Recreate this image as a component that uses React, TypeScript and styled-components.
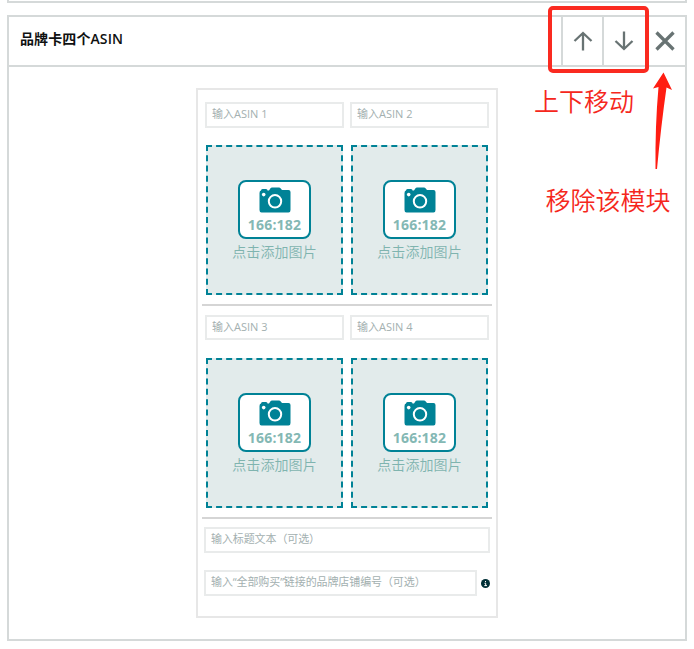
import React from 'react';
import styled, { createGlobalStyle } from 'styled-components';

const Global = createGlobalStyle`
  * { box-sizing: border-box; }
  html, body { margin: 0; background: #fff; }
  body {
    width: 694px;
    height: 649px;
    overflow: hidden;
    font-family: "Open Sans", "Noto Sans CJK SC", sans-serif;
  }
  svg { flex-shrink: 0; }
`;

const Page = styled.div`
  position: relative;
  width: 694px;
  height: 649px;
  padding: 0 7px;
  overflow: hidden;
`;

const PreviousModule = styled.div`
  height: 3px;
  margin-bottom: 12px;
  border: 2px solid #d5d9d9;
  border-top: 0;
`;

const Module = styled.section`
  display: flex;
  flex-direction: column;
  align-items: center;
  height: 626px;
  border: 2px solid #d5d9d9;
`;

const Header = styled.header`
  display: flex;
  align-self: stretch;
  align-items: stretch;
  height: 50px;
  margin-bottom: 21px;
  border-bottom: 2px solid #d5d9d9;
`;

const Title = styled.h2`
  flex: 1;
  margin: 0;
  padding: 0 0 1px 11px;
  font-size: 14px;
  line-height: 44px;
  font-weight: 600;
  letter-spacing: 0.1px;
  color: #0f1111;
`;

const HeaderButton = styled.button<{ $width: number; $divided?: boolean }>`
  display: flex;
  align-items: center;
  justify-content: center;
  width: ${p => p.$width}px;
  padding: 0 0 0 ${p => (p.$divided ? 0 : 1)}px;
  border: 0;
  border-left: ${p => (p.$divided ? '2px solid #d5d9d9' : '0')};
  background: transparent;
  color: #687373;
`;

const Card = styled.div`
  width: 302px;
  height: 530px;
  padding: 12px 4px 0;
  border: 2px solid #e7e7e7;
`;

const Products = styled.div<{ $last?: boolean }>`
  display: grid;
  grid-template-columns: 139px 139px;
  column-gap: 6px;
  row-gap: ${p => (p.$last ? 18 : 17)}px;
  justify-items: center;
  padding: 0 3px 9px;
  margin-bottom: ${p => (p.$last ? 8 : 9)}px;
  border-bottom: 2px solid #d5d5d5;
`;

const Field = styled.input<{ $width: number; $height?: number }>`
  display: block;
  width: ${p => p.$width}px;
  height: ${p => p.$height ?? 26}px;
  padding: 0 5px 3px;
  border: 2px solid #e9ebeb;
  border-radius: 0;
  background: #fff;
  outline: 0;
  font: 400 11px "Open Sans", "Noto Sans CJK SC", sans-serif;
  &::placeholder { color: #a3b0b0; opacity: 1; }
`;

const WideField = styled(Field)`
  letter-spacing: -0.1px;
`;

const DropZone = styled.div`
  display: flex;
  flex-direction: column;
  align-items: center;
  width: 137px;
  height: 150px;
  padding-top: 33px;
  border: 2px dashed #008296;
  background: #e2ebeb;
`;

const ImageSize = styled.div`
  display: flex;
  flex-direction: column;
  align-items: center;
  width: 73px;
  height: 59px;
  padding-top: 5px;
  border: 2px solid #008296;
  border-radius: 8px;
  background: #fff;
  color: #84b8b4;
  font-size: 14px;
  line-height: 24px;
  font-weight: 700;
  letter-spacing: 0.2px;
`;

const AddLabel = styled.span`
  margin-top: 2px;
  font-size: 14px;
  line-height: 21px;
  font-weight: 350;
  letter-spacing: 0.1px;
  color: #7fb4af;
`;

const Fields = styled.div`
  display: grid;
  row-gap: 17px;
  padding-left: 2px;
`;

const FieldRow = styled.div`
  display: flex;
  align-items: center;
  gap: 4px;
`;

const Highlight = styled.div`
  position: absolute;
  left: 548px;
  top: 6px;
  width: 101px;
  height: 67px;
  border: 4px solid #fa2a20;
  border-radius: 5px;
`;

const Note = styled.div<{ $x: number; $y: number }>`
  position: absolute;
  left: ${p => p.$x}px;
  top: ${p => p.$y}px;
  font: 350 25px/36px "Noto Sans CJK SC", sans-serif;
  white-space: nowrap;
  color: #f5271c;
`;

const Pointer = styled.svg`
  position: absolute;
  left: 652px;
  top: 71px;
`;

const Camera = () => (
  <svg width="32" height="26" viewBox="0 0 32 26">
    <path
      fill="#008296"
      d="M2 3.5Q2 2 3.5 2H7Q8.5 2 8.5 3.5H10L11.5 1.2Q12 .5 13 .5H20Q21 .5 21.5 1.2L23 3H29.5Q31.5 3 31.5 5V23Q31.5 25.5 29.5 25.5H2.5Q.5 25.5 .5 23V6Q.5 3.5 2 3.5Z"
    />
    <circle cx="16" cy="14.3" r="6.2" fill="none" stroke="#fff" strokeWidth="2" />
    <circle cx="4.7" cy="7.6" r="1.8" fill="#fff" />
  </svg>
);

const Arrow = ({ down }: { down?: boolean }) => (
  <svg width="20" height="20" viewBox="0 0 20 20" fill="none" stroke="currentColor" strokeWidth="2.3">
    <path d={down ? 'M10 .5V18M1.5 10L10 18L18.5 10' : 'M10 19.5V2M1.5 10L10 2L18.5 10'} />
  </svg>
);

const Info = () => (
  <svg width="9" height="9" viewBox="0 0 9 9">
    <circle cx="4.5" cy="4.5" r="4.5" fill="#002f36" />
    <path d="M4.5 2V3.2M3.5 4.3H4.7V6.6M3.3 6.6H6" fill="none" stroke="#fff" strokeWidth="1" />
  </svg>
);

const ImagePicker = () => (
  <DropZone>
    <ImageSize>
      <Camera />
      166:182
    </ImageSize>
    <AddLabel>点击添加图片</AddLabel>
  </DropZone>
);

export default function App() {
  return (
    <>
      <Global />
      <Page>
        <PreviousModule />
        <Module>
          <Header>
            <Title>品牌卡四个ASIN</Title>
            <HeaderButton $width={41} $divided aria-label="上移"><Arrow /></HeaderButton>
            <HeaderButton $width={42} $divided aria-label="下移"><Arrow down /></HeaderButton>
            <HeaderButton $width={41} aria-label="移除">
              <svg width="20" height="20" viewBox="0 0 20 20">
                <path d="M1.5 1.5L18.5 18.5M18.5 1.5L1.5 18.5" stroke="currentColor" strokeWidth="3.3" />
              </svg>
            </HeaderButton>
          </Header>
          <Card>
            <Products>
              <Field $width={139} placeholder="输入ASIN 1" />
              <Field $width={139} placeholder="输入ASIN 2" />
              <ImagePicker />
              <ImagePicker />
            </Products>
            <Products $last>
              <Field $width={139} $height={25} placeholder="输入ASIN 3" />
              <Field $width={139} $height={25} placeholder="输入ASIN 4" />
              <ImagePicker />
              <ImagePicker />
            </Products>
            <Fields>
              <WideField $width={286} placeholder="输入标题文本（可选）" />
              <FieldRow>
                <WideField $width={273} placeholder="输入“全部购买”链接的品牌店铺编号（可选）" />
                <Info />
              </FieldRow>
            </Fields>
          </Card>
        </Module>
        <Highlight />
        <Note $x={534} $y={82}>上下移动</Note>
        <Note $x={545.5} $y={181}>移除该模块</Note>
        <Pointer width="22" height="100" viewBox="0 0 22 100">
          <path d="M11.5 1.5L20 19L14.5 16.5Q9 55 5 98L3.5 98Q3 55 6.5 16L1 17.5Z" fill="#ff1d12" />
        </Pointer>
      </Page>
    </>
  );
}
